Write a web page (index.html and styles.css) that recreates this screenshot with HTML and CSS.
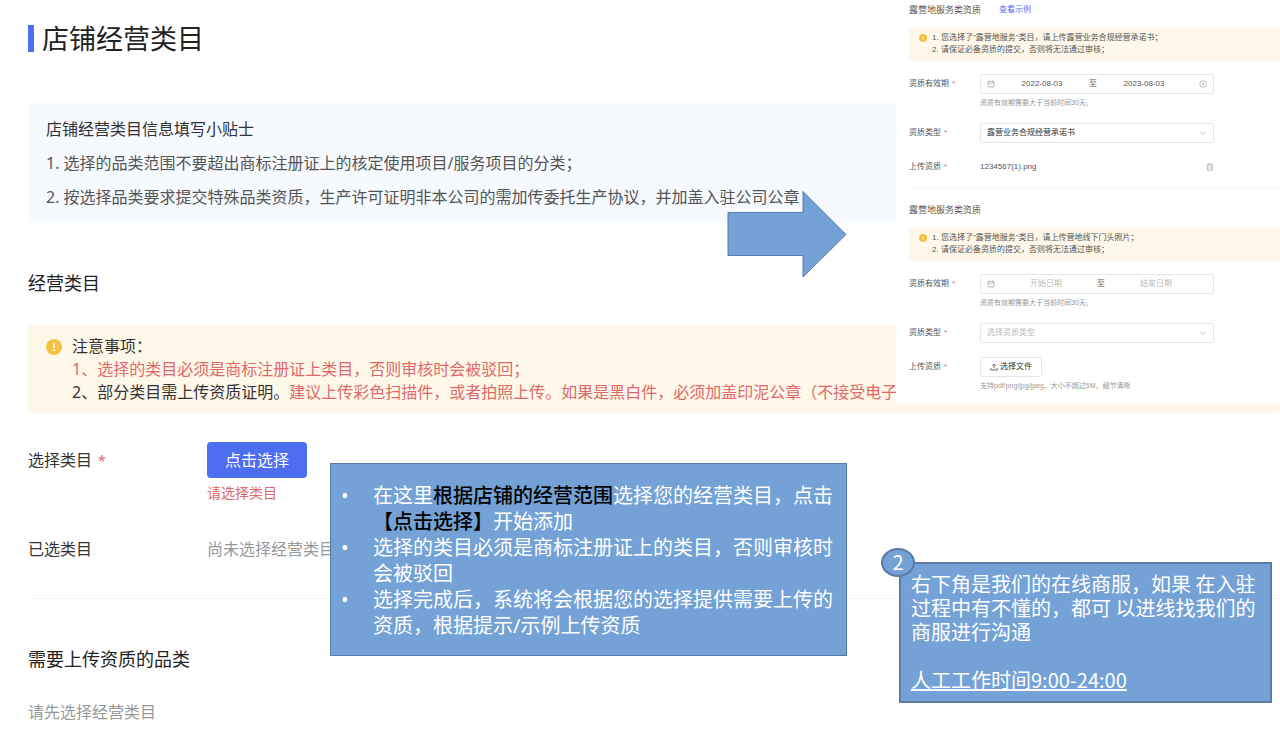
FILE: index.html
```
<!DOCTYPE html>
<html lang="zh-CN">
<head>
  <meta charset="UTF-8" />
  <meta name="viewport" content="width=device-width, initial-scale=1" />
  <title>店铺经营类目</title>
  <link rel="stylesheet" href="styles.css">
</head>
<body>
  <main class="page">
    <h1 class="page-title">店铺经营类目</h1>

    <section class="tips">
      <h2 class="tips-title">店铺经营类目信息填写小贴士</h2>
      <p>1. 选择的品类范围不要超出商标注册证上的核定使用项目/服务项目的分类；</p>
      <p>2. 按选择品类要求提交特殊品类资质，生产许可证明非本公司的需加传委托生产协议，并加盖入驻公司公章</p>
    </section>

    <h2 class="section-title">经营类目</h2>

    <div class="notice">
      <svg class="notice-icon" viewBox="0 0 16 16" aria-hidden="true">
        <circle cx="8" cy="8" r="8" fill="#f5c343" />
        <path d="M8 4v5M8 10.6v1.6" stroke="#fff" stroke-width="1.6" />
      </svg>
      <div>
        <p>注意事项：</p>
        <p class="red">1、选择的类目必须是商标注册证上类目，否则审核时会被驳回；</p>
        <p>2、部分类目需上传资质证明。<span class="red">建议上传彩色扫描件，或者拍照上传。如果是黑白件，必须加盖印泥公章（不接受电子</span></p>
      </div>
    </div>

    <div class="form">
      <label class="form-label" for="pick">选择类目<span class="star">*</span></label>
      <div>
        <button class="btn-primary" id="pick" type="button">点击选择</button>
        <p class="error">请选择类目</p>
      </div>
      <span class="form-value">已选类目</span>
      <span class="form-value muted">尚未选择经营类目</span>
    </div>

    <hr class="divider">

    <h2 class="section-title">需要上传资质的品类</h2>
    <p class="empty">请先选择经营类目</p>
  </main>

  <aside class="panel">
    <section class="cert">
      <h3 class="cert-title">露营地服务类资质<a href="#">查看示例</a></h3>
      <div class="cert-notice">
        <svg class="cert-notice-icon" viewBox="0 0 16 16" aria-hidden="true">
          <circle cx="8" cy="8" r="8" fill="#f5c343" />
          <path d="M8 4v5M8 10.6v1.6" stroke="#fff" stroke-width="1.6" />
        </svg>
        <div>
          <p>1. 您选择了"露营地服务"类目，请上传露营业务合规经营承诺书；</p>
          <p>2. 请保证必备资质的提交，否则将无法通过审核；</p>
        </div>
      </div>
      <div class="cert-row">
        <label for="start-1">资质有效期<span class="star">*</span></label>
        <div class="cert-field">
          <div class="date-range">
            <svg class="icon" viewBox="0 0 16 16" aria-hidden="true"><path d="M2 3h12v11H2zM2 6.5h12M5 1v3M11 1v3" /></svg>
            <input id="start-1" type="text" value="2022-08-03">
            <span class="date-to">至</span>
            <input type="text" value="2023-08-03" aria-label="结束日期">
            <svg class="icon clear" viewBox="0 0 16 16" aria-hidden="true"><circle cx="8" cy="8" r="6.5" /><path d="M5.5 5.5l5 5M10.5 5.5l-5 5" /></svg>
          </div>
          <p class="hint">资质有效期需要大于当前时间30天。</p>
        </div>
      </div>
      <div class="cert-row">
        <label for="type-1">资质类型<span class="star">*</span></label>
        <div class="cert-field select-box">
          <select id="type-1">
            <option>露营业务合规经营承诺书</option>
          </select>
          <svg class="icon" viewBox="0 0 16 16" aria-hidden="true"><path d="M2 5l6 6 6-6" /></svg>
        </div>
      </div>
      <div class="cert-row">
        <span class="cert-label">上传资质<span class="star">*</span></span>
        <div class="cert-field file">
          <span>1234567(1).png</span>
          <svg class="icon" viewBox="0 0 16 16" aria-hidden="true"><path d="M1.5 4h13M5.5 4V1.5h5V4M3 4v10.5h10V4M6.3 7v5M9.7 7v5" /></svg>
        </div>
      </div>
    </section>

    <section class="cert">
      <h3 class="cert-title">露营地服务类资质</h3>
      <div class="cert-notice">
        <svg class="cert-notice-icon" viewBox="0 0 16 16" aria-hidden="true">
          <circle cx="8" cy="8" r="8" fill="#f5c343" />
          <path d="M8 4v5M8 10.6v1.6" stroke="#fff" stroke-width="1.6" />
        </svg>
        <div>
          <p>1. 您选择了"露营地服务"类目，请上传营地线下门头照片；</p>
          <p>2. 请保证必备资质的提交，否则将无法通过审核；</p>
        </div>
      </div>
      <div class="cert-row">
        <label for="start-2">资质有效期<span class="star">*</span></label>
        <div class="cert-field">
          <div class="date-range">
            <svg class="icon" viewBox="0 0 16 16" aria-hidden="true"><path d="M2 3h12v11H2zM2 6.5h12M5 1v3M11 1v3" /></svg>
            <input id="start-2" type="text" placeholder="开始日期">
            <span class="date-to">至</span>
            <input type="text" placeholder="结束日期" aria-label="结束日期">
          </div>
          <p class="hint">资质有效期需要大于当前时间30天。</p>
        </div>
      </div>
      <div class="cert-row">
        <label for="type-2">资质类型<span class="star">*</span></label>
        <div class="cert-field select-box">
          <select id="type-2" class="is-empty">
            <option>选择资质类型</option>
          </select>
          <svg class="icon" viewBox="0 0 16 16" aria-hidden="true"><path d="M2 5l6 6 6-6" /></svg>
        </div>
      </div>
      <div class="cert-row">
        <label for="upload">上传资质<span class="star">*</span></label>
        <div class="cert-field">
          <button class="btn-upload" id="upload" type="button">
            <svg class="icon" viewBox="0 0 16 16" aria-hidden="true"><path d="M8 11V2M4.5 5.5L8 2l3.5 3.5M1.5 10v4h13v-4" /></svg>
            选择文件
          </button>
          <p class="hint">支持pdf/png/jpg/jpeg，大小不超过5M，细节清晰</p>
        </div>
      </div>
    </section>
  </aside>

  <svg class="arrow" viewBox="0 0 120 88" aria-hidden="true">
    <path d="M1 22.5H76V1.5L119 44.5L76 87V65.5H1Z" />
  </svg>

  <div class="callout callout-steps">
    <ul>
      <li>在这里<strong>根据店铺的经营范围</strong>选择您的经营类目，点击<strong>【点击选择】</strong>开始添加</li>
      <li>选择的类目必须是商标注册证上的类目，否则审核时会被驳回</li>
      <li>选择完成后，系统将会根据您的选择提供需要上传的资质，根据提示/示例上传资质</li>
    </ul>
  </div>

  <div class="callout callout-service">
    <span class="callout-badge">2</span>
    <p>右下角是我们的在线商服，如果 在入驻过程中有不懂的，都可 以进线找我们的商服进行沟通</p>
    <p class="hours">人工工作时间9:00-24:00</p>
  </div>
</body>
</html>
```
FILE: styles.css
```
:root {
  --text: #333;
  --text-light: #555;
  --muted: #999;
  --red: #e0686c;
  --primary: #4e6ef2;
  --cream: #fef8e9;
  --callout: #74a2d6;
  --callout-border: #5a7ba3;
  --line: #e6e6e6;
}

* {
  box-sizing: border-box;
}

body {
  position: relative;
  margin: 0;
  min-height: 100vh;
  overflow-x: hidden;
  background: #fff;
  color: var(--text);
  font-family: "Noto Sans", "Noto Sans CJK SC", sans-serif;
  font-size: 16px;
}

h1,
h2,
h3,
p,
ul {
  margin: 0;
  padding: 0;
}

.page {
  padding: 25px 0 0 28px;
}

.page-title {
  padding-left: 8px;
  border-left: 6px solid var(--primary);
  color: #222;
  font-size: 27px;
  font-weight: 400;
  line-height: 27px;
}

.tips {
  margin-top: 51px;
  padding: 9px 18px;
  border-radius: 3px;
  background: #f6f9fe;
  color: var(--text-light);
  line-height: 34px;
  white-space: nowrap;
}

.tips-title {
  color: var(--text);
  font-size: 16px;
  font-weight: 400;
}

.section-title {
  margin: 46px 0 28px;
  color: #222;
  font-size: 18px;
  font-weight: 400;
  line-height: 28px;
}

.notice {
  display: flex;
  gap: 10px;
  padding: 10px 0 9px 18px;
  border-radius: 3px;
  background: var(--cream);
  line-height: 23px;
  white-space: nowrap;
}

.notice-icon {
  flex: none;
  width: 16px;
  height: 16px;
  margin-top: 4px;
}

.red {
  color: var(--red);
}

.star {
  margin-left: 6px;
  color: var(--red);
}

.form {
  display: grid;
  grid-template-columns: 179px 1fr;
  row-gap: 35px;
  margin-top: 29px;
}

.form-label {
  line-height: 36px;
}

.form .star {
  font-size: 14px;
}

.form-value {
  line-height: 24px;
}

.form .muted,
.empty {
  color: var(--muted);
}

.btn-primary {
  display: block;
  height: 36px;
  padding: 0 18px;
  border: 0;
  border-radius: 4px;
  background: var(--primary);
  color: #fff;
  font: inherit;
  line-height: 36px;
  cursor: pointer;
}

.error {
  margin-top: 6px;
  color: var(--red);
  font-size: 14px;
  line-height: 18px;
}

.divider {
  margin: 37px 0 0;
  border: 0;
  border-top: 1px solid #f4f4f4;
}

.empty {
  line-height: 22px;
}

/* certificate panel */
.panel {
  position: absolute;
  top: 0;
  right: 0;
  width: 30%;
  min-width: 340px;
  padding: 0 0 12px 13px;
  background: #fff;
  color: var(--text-light);
  font-family: "Liberation Sans", "Noto Sans CJK SC", sans-serif;
  font-size: 8px;
  line-height: 12px;
}

.cert + .cert {
  margin-top: 11px;
  padding-top: 11px;
  border-top: 1px solid #f4f4f4;
}

.cert-title {
  display: flex;
  gap: 18px;
  font-size: 9px;
  font-weight: 400;
  line-height: 20px;
}

.cert-title a {
  color: #5b6cf0;
  font-size: 8px;
  text-decoration: none;
}

.cert-notice {
  display: flex;
  gap: 5px;
  margin: 8px 0 13px;
  padding: 4px 10px 5px;
  background: var(--cream);
}

.cert-notice-icon {
  width: 8px;
  height: 8px;
  margin-top: 2px;
}

.cert-row {
  display: flex;
}

.cert-row + .cert-row {
  margin-top: 14px;
}

.cert-row label,
.cert-label {
  width: 71px;
  line-height: 20px;
}

.cert .star {
  margin-left: 3px;
}

.cert-field {
  width: 234px;
}

.date-range {
  display: flex;
  align-items: center;
  height: 20px;
  padding: 0 6px;
  border: 1px solid var(--line);
  border-radius: 2px;
}

.date-range input {
  flex: 1;
  min-width: 0;
  padding: 0;
  border: 0;
  background: none;
  color: var(--text-light);
  font: inherit;
  text-align: center;
}

.date-range input::placeholder {
  color: #bbb;
}

.icon {
  flex: none;
  width: 8px;
  height: 8px;
  fill: none;
  stroke: #aaa;
  stroke-width: 1.5;
}

.clear {
  margin-left: 8px;
}

.hint {
  margin-top: 3px;
  color: #999;
  font-size: 7px;
}

.select-box {
  display: grid;
  align-items: center;
}

.select-box select {
  grid-area: 1 / 1;
  width: 100%;
  height: 20px;
  padding: 0 6px;
  border: 1px solid var(--line);
  border-radius: 2px;
  appearance: none;
  background: #fff;
  color: var(--text);
  font: inherit;
}

.select-box .is-empty {
  color: #bbb;
}

.select-box .icon {
  grid-area: 1 / 1;
  justify-self: end;
  margin-right: 7px;
  pointer-events: none;
}

.file {
  display: flex;
  align-items: center;
  justify-content: space-between;
}

.btn-upload {
  display: flex;
  align-items: center;
  gap: 2px;
  height: 20px;
  padding: 0 9px;
  border: 1px solid var(--line);
  border-radius: 2px;
  background: #fff;
  color: var(--text);
  font: inherit;
  cursor: pointer;
}

.btn-upload .icon {
  stroke: #444;
}

/* annotations over the page */
.arrow {
  position: absolute;
  top: 190px;
  left: 727px;
  width: 120px;
  height: 88px;
  fill: var(--callout);
  stroke: var(--callout-border);
}

.callout {
  position: absolute;
  border: 1px solid var(--callout-border);
  background: var(--callout);
  color: #fff;
  font-size: 20px;
}

.callout-steps {
  top: 463px;
  left: 330px;
  width: 517px;
  padding: 19px 12px 16px 42px;
  line-height: 26px;
}

.callout-steps ul {
  list-style: none;
}

.callout-steps li::before {
  content: "•";
  float: left;
  width: 32px;
  margin-left: -32px;
}

.callout-steps strong {
  color: #000;
  font-weight: 500;
}

.callout-service {
  top: 562px;
  right: 8px;
  width: 373px;
  padding: 8px 8px 9px 10px;
  border-width: 2px;
  font-family: "Noto Sans CJK SC", sans-serif;
  line-height: 24px;
}

.hours {
  margin-top: 24px;
  text-decoration: underline;
}

.callout-badge {
  position: absolute;
  top: -16px;
  left: -20px;
  width: 34px;
  height: 29px;
  border: 2px solid var(--callout-border);
  border-radius: 50%;
  background: var(--callout);
  line-height: 24px;
  text-align: center;
}
```
